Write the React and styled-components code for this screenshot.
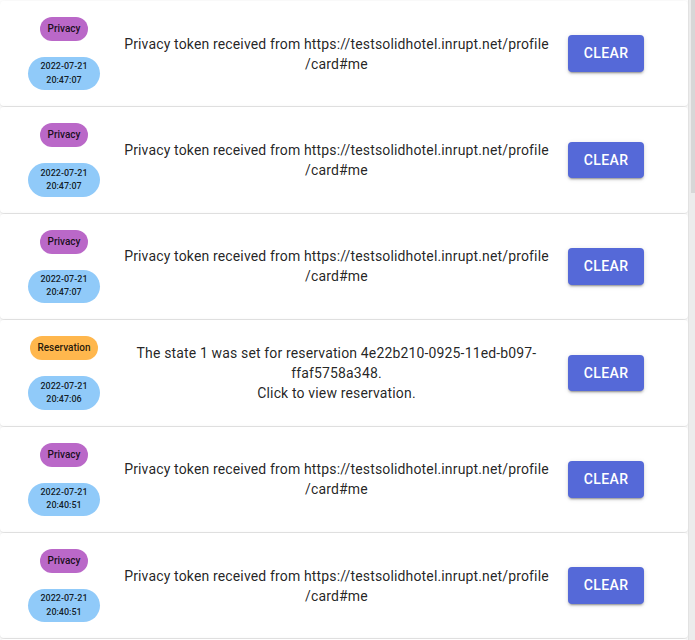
import React from "react";
import styled, { createGlobalStyle } from "styled-components";

const Global = createGlobalStyle`
  html, body { margin: 0; padding: 0; background: #ffffff; overflow: hidden; }
  body { font-family: Roboto, "Noto Sans", "Liberation Sans", sans-serif; }
`;

const Page = styled.div`
  display: flex;
  height: 640px;
`;

const List = styled.div`
  flex: 1;
  display: flex;
  flex-direction: column;
  gap: 1px;
  padding-top: 1px;
  overflow-y: auto;
  scrollbar-width: none;
  &::-webkit-scrollbar { display: none; }
`;

const Track = styled.div`
  width: 7px;
  flex: none;
  background: #ececec;
  border-left: 1px solid #e2e2e2;
  box-sizing: border-box;
  display: flex;
  justify-content: flex-end;
`;

const Thumb = styled.div`
  width: 4px;
  height: 193px;
  background: #d7d7d7;
`;

const Card = styled.div`
  flex: none;
  display: grid;
  grid-template-columns: 104px 441px 1fr;
  align-items: center;
  padding: 16px 33px 16px 12px;
  background: #fff;
  border-radius: 4px;
  box-shadow: 0px 1px 4px 0px rgba(0,0,0,0.1), 0px 1px 1px 0px rgba(0,0,0,0.05);
`;

const Tags = styled.div`
  display: flex;
  flex-direction: column;
  align-items: center;
  gap: 16px;
`;

const Chip = styled.span`
  display: inline-flex;
  align-items: center;
  justify-content: center;
  text-align: center;
  border-radius: 999px;
  background: ${(p) => p.$bg};
  color: rgba(0,0,0,0.87);
  font-weight: 500;
  font-size: ${(p) => (p.$small ? "9px" : "10px")};
  line-height: ${(p) => (p.$small ? "13.2px" : "24px")};
  height: ${(p) => (p.$small ? "33.4px" : "24px")};
  padding: 0 ${(p) => (p.$small ? "12px" : "7.5px")};
  box-sizing: border-box;
`;

const Message = styled.div`
  font-size: 14px;
  line-height: 20px;
  color: rgba(0,0,0,0.87);
  text-align: center;
  letter-spacing: 0.01071em;
`;

const Action = styled.div`
  display: flex;
  justify-content: center;
`;

const ClearButton = styled.button`
  font-family: inherit;
  font-size: 14px;
  font-weight: 500;
  letter-spacing: 0.02857em;
  line-height: 24.5px;
  text-transform: uppercase;
  color: #fff;
  background: #5569d8;
  border: 0;
  border-radius: 4px;
  padding: 6px 16px;
  min-width: 64px;
  cursor: pointer;
  box-shadow: 0px 3px 1px -2px rgba(0,0,0,0.2), 0px 2px 2px 0px rgba(0,0,0,0.14), 0px 1px 5px 0px rgba(0,0,0,0.12);
`;

const TAG = {
  Privacy: "#ba68c8",
  Reservation: "#ffb74d",
};

const privacyMsg = (
  <>Privacy token received from https://testsolidhotel.inrupt.net/profile<wbr />/card#me</>
);

const resMsg = (id) => (
  <>
    The state 1 was set for reservation {id}.
    <br />
    Click to view reservation.
  </>
);

const items = [
  { tag: "Privacy", date: "2022-07-21", time: "20:47:07", msg: privacyMsg },
  { tag: "Privacy", date: "2022-07-21", time: "20:47:07", msg: privacyMsg },
  { tag: "Privacy", date: "2022-07-21", time: "20:47:07", msg: privacyMsg },
  { tag: "Reservation", date: "2022-07-21", time: "20:47:06", msg: resMsg("4e22b210-0925-11ed-b097-ffaf5758a348") },
  { tag: "Privacy", date: "2022-07-21", time: "20:40:51", msg: privacyMsg },
  { tag: "Privacy", date: "2022-07-21", time: "20:40:51", msg: privacyMsg },
  { tag: "Privacy", date: "2022-07-21", time: "20:40:51", msg: privacyMsg },
  { tag: "Reservation", date: "2022-07-21", time: "20:40:50", msg: resMsg("1b7c3e40-0924-11ed-b097-ffaf5758a348") },
  { tag: "Privacy", date: "2022-07-21", time: "20:31:12", msg: privacyMsg },
  { tag: "Privacy", date: "2022-07-21", time: "20:31:12", msg: privacyMsg },
  { tag: "Privacy", date: "2022-07-21", time: "20:31:12", msg: privacyMsg },
  { tag: "Reservation", date: "2022-07-21", time: "20:31:11", msg: resMsg("c0a1f2d0-0922-11ed-b097-ffaf5758a348") },
  { tag: "Privacy", date: "2022-07-21", time: "20:22:45", msg: privacyMsg },
  { tag: "Privacy", date: "2022-07-21", time: "20:22:45", msg: privacyMsg },
  { tag: "Privacy", date: "2022-07-21", time: "20:22:45", msg: privacyMsg },
  { tag: "Reservation", date: "2022-07-21", time: "20:22:44", msg: resMsg("8f3d6a10-0921-11ed-b097-ffaf5758a348") },
  { tag: "Privacy", date: "2022-07-21", time: "20:10:03", msg: privacyMsg },
  { tag: "Privacy", date: "2022-07-21", time: "20:10:03", msg: privacyMsg },
  { tag: "Privacy", date: "2022-07-21", time: "20:10:03", msg: privacyMsg },
  { tag: "Reservation", date: "2022-07-21", time: "20:10:02", msg: resMsg("5e9b7c20-0920-11ed-b097-ffaf5758a348") },
];

export default function App() {
  return (
    <>
      <Global />
      <Page>
        <List>
          {items.map((it, i) => (
            <Card key={i}>
              <Tags>
                <Chip $bg={TAG[it.tag]}>{it.tag}</Chip>
                <Chip $bg="#90caf9" $small>
                  {it.date}
                  <br />
                  {it.time}
                </Chip>
              </Tags>
              <Message>{it.msg}</Message>
              <Action>
                <ClearButton>Clear</ClearButton>
              </Action>
            </Card>
          ))}
        </List>
        <Track>
          <Thumb />
        </Track>
      </Page>
    </>
  );
}
